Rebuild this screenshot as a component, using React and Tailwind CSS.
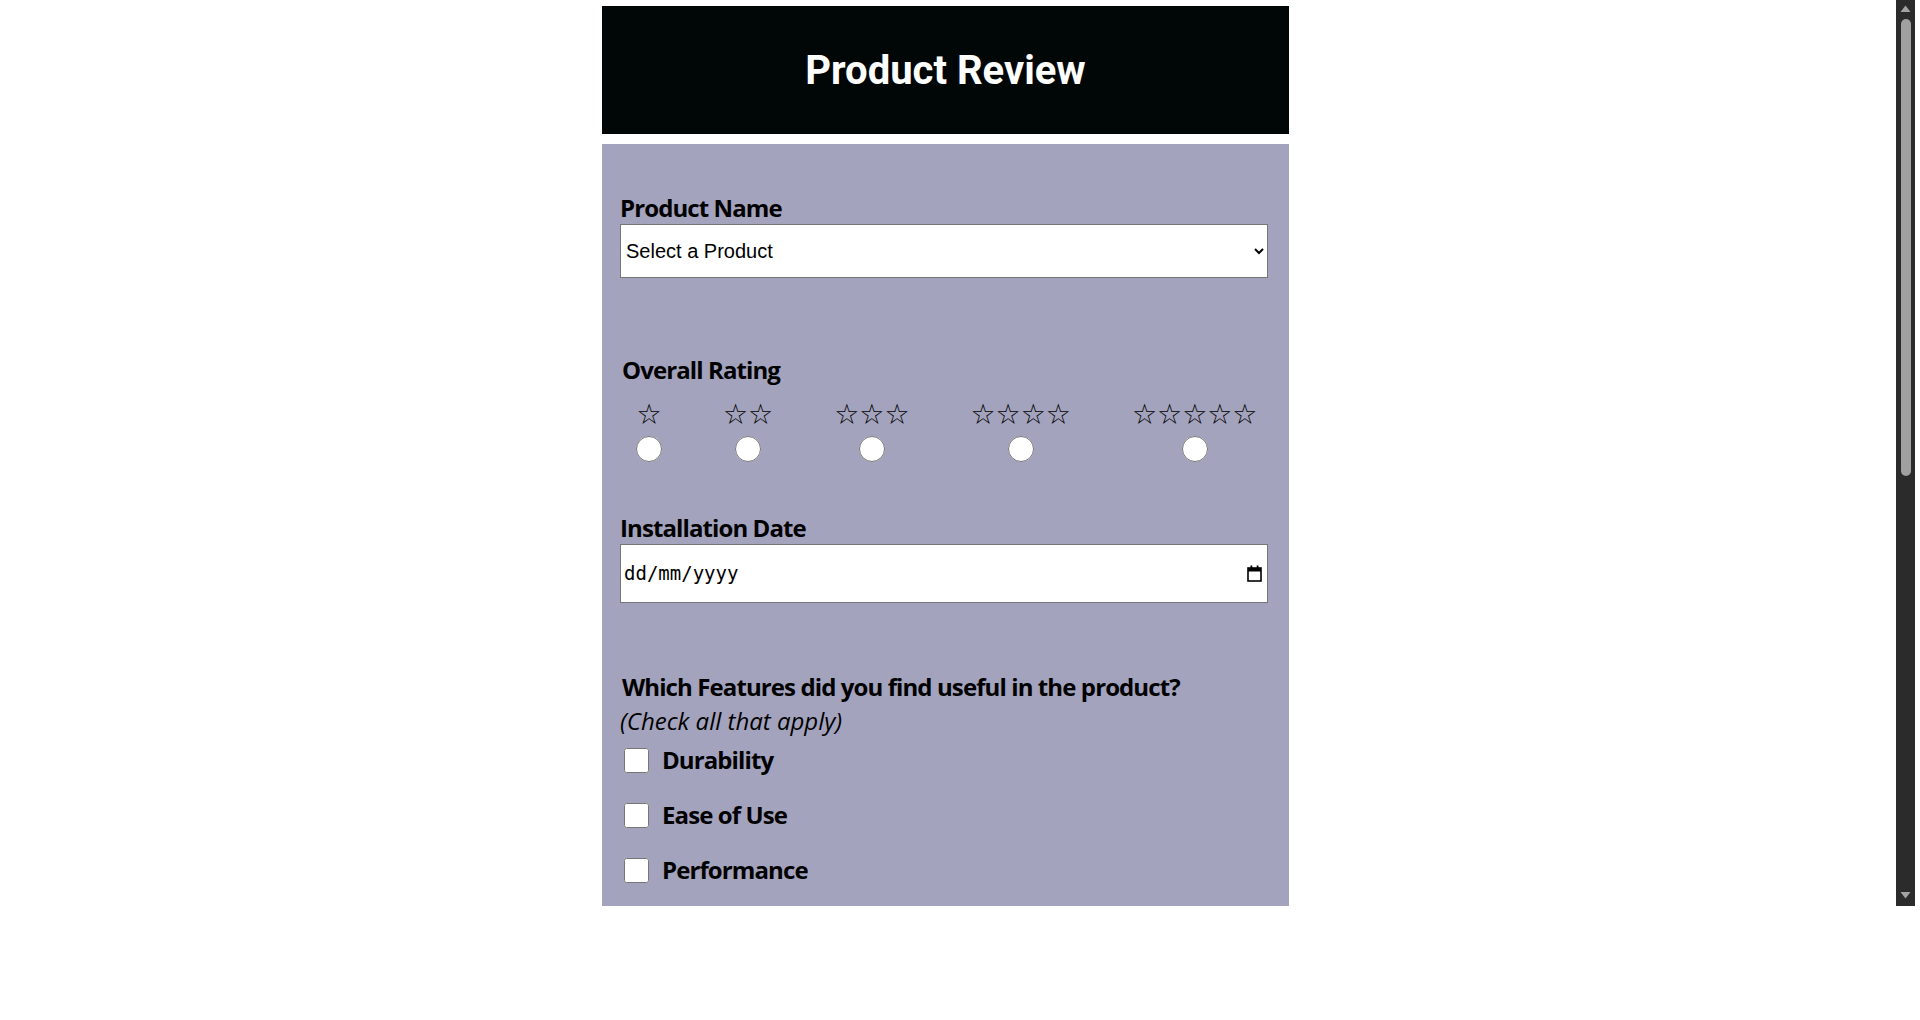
import { useState } from "react";

const ratings = [1, 2, 3, 4, 5];
const features = ["Durability", "Ease of Use", "Performance"];

function CalendarIcon() {
  return (
    <svg width="15" height="17" viewBox="0 0 15 17" className="shrink-0">
      <rect x="1" y="3" width="13" height="13" fill="none" stroke="#000" strokeWidth="1.6" />
      <rect x="1" y="3" width="13" height="3.5" fill="#000" />
      <rect x="3.5" y="0.5" width="1.8" height="3" fill="#000" />
      <rect x="9.7" y="0.5" width="1.8" height="3" fill="#000" />
    </svg>
  );
}

// browser scrollbar as seen in the screenshot (dark scheme)
function FakeScrollbar() {
  return (
    <div className="w-[19px] h-[906px] bg-[#2b2b2b] flex flex-col items-center shrink-0">
      <svg width="19" height="17" viewBox="0 0 19 17">
        <path d="M4.5 12 L9.5 5.5 L14.5 12 Z" fill="#a3a3a3" />
      </svg>
      <div className="w-[10px] h-[457px] ml-[1px] mt-[2px] rounded-full bg-[#a0a0a0]" />
      <div className="flex-1" />
      <svg width="19" height="17" viewBox="0 0 19 17" className="mb-[2px]">
        <path d="M4.5 5 L9.5 11.5 L14.5 5 Z" fill="#a3a3a3" />
      </svg>
    </div>
  );
}

export default function App() {
  const [rating, setRating] = useState(null);
  const [checked, setChecked] = useState({});

  return (
    <div className="flex bg-white">
      <div className="w-[1896px] h-[906px] overflow-hidden">
        <div className="pt-[6px] font-['Open_Sans',sans-serif]">
          {/* header bar */}
          <header className="ml-[602px] w-[687px] h-[128px] bg-[#010606] flex items-center justify-center">
            <h1 className="text-white text-[40px] font-bold font-['Roboto',sans-serif] leading-none mt-[2px]">Product Review</h1>
          </header>

          <form className="ml-[602px] w-[687px] mt-[10px] bg-[#a3a3bd] pl-[18px] pr-[21px] pt-[48px] pb-[200px] text-black">
            {/* product */}
            <label className="block text-[24px] font-bold leading-[32px] tracking-[-0.9px]">Product Name</label>
            <select className="block w-full h-[54px] bg-white border border-[#767676] px-[1px] text-[20px] font-['Liberation_Sans',Arial,sans-serif] text-black">
              <option>Select a Product</option>
              <option>Widget</option>
              <option>Gadget</option>
            </select>

            {/* rating */}
            <fieldset className="mt-[76px] pl-[2px]">
              <legend className="text-[24px] font-bold leading-[32px] tracking-[-0.9px]">Overall Rating</legend>
              <div className="flex gap-[61px] pl-[14px] mt-[17px]">
                {ratings.map((r) => (
                  <label key={r} className="flex flex-col items-center cursor-pointer">
                    <span className="text-[28px] leading-[24px] font-['DejaVu_Sans',sans-serif] font-normal text-black">
                      {"☆".repeat(r)}
                    </span>
                    <input
                      type="radio"
                      name="rating"
                      checked={rating === r}
                      onChange={() => setRating(r)}
                      className="w-[26px] h-[26px] mt-[9px] m-0"
                    />
                  </label>
                ))}
              </div>
            </fieldset>

            {/* date */}
            <label className="block mt-[50px] text-[24px] font-bold leading-[32px] tracking-[-0.9px]">Installation Date</label>
            <div className="flex items-center w-full h-[59px] bg-white border border-[#767676] pl-[3px] pr-[5px]">
              <input
                type="text"
                placeholder="dd/mm/yyyy"
                className="flex-1 outline-none bg-transparent text-[19px] font-['DejaVu_Sans_Mono',monospace] placeholder:text-black"
              />
              <CalendarIcon />
            </div>

            {/* features */}
            <div className="mt-[68px] pl-[2px] text-[24px] font-bold leading-[32px] tracking-[-0.9px]">
              Which Features did you find useful in the product?
            </div>
            <div className="text-[24px] italic leading-[32px] mt-[2px]">(Check all that apply)</div>
            <div className="flex flex-col gap-[23px] mt-[7px]">
              {features.map((f) => (
                <label key={f} className="flex items-center gap-[13px] pl-[4px] cursor-pointer">
                  <input
                    type="checkbox"
                    checked={!!checked[f]}
                    onChange={() => setChecked({ ...checked, [f]: !checked[f] })}
                    className="w-[25px] h-[25px] m-0"
                  />
                  <span className="text-[24px] font-bold leading-[32px] tracking-[-0.9px]">{f}</span>
                </label>
              ))}
            </div>
          </form>
        </div>
      </div>
      <FakeScrollbar />
    </div>
  );
}
